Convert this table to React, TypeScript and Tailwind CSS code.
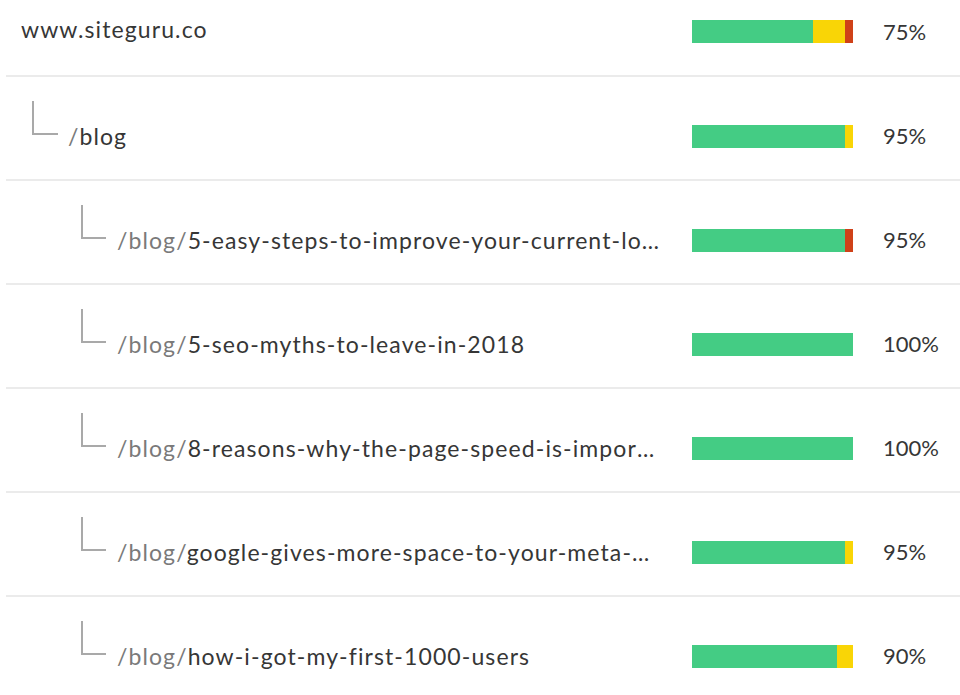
import React from "react";

type Row = {
  level: 0 | 1 | 2;
  prefix?: string;
  text: string;
  green: number;
  yellow: number;
  red: number;
  pct: string;
};

const rows: Row[] = [
  { level: 0, text: "www.siteguru.co", green: 121, yellow: 32, red: 8, pct: "75%" },
  { level: 1, prefix: "/", text: "blog", green: 153, yellow: 8, red: 0, pct: "95%" },
  { level: 2, prefix: "/blog/", text: "5-easy-steps-to-improve-your-current-local-seo-strategy", green: 153, yellow: 0, red: 8, pct: "95%" },
  { level: 2, prefix: "/blog/", text: "5-seo-myths-to-leave-in-2018", green: 161, yellow: 0, red: 0, pct: "100%" },
  { level: 2, prefix: "/blog/", text: "8-reasons-why-the-page-speed-is-important-for-seo", green: 161, yellow: 0, red: 0, pct: "100%" },
  { level: 2, prefix: "/blog/", text: "google-gives-more-space-to-your-meta-descriptions", green: 153, yellow: 8, red: 0, pct: "95%" },
  { level: 2, prefix: "/blog/", text: "how-i-got-my-first-1000-users", green: 145, yellow: 16, red: 0, pct: "90%" },
];

function Connector({ level }: { level: 1 | 2 }) {
  if (level === 1) {
    return (
      <div className="ml-[11px] mr-[10px] mb-[36px] h-[34px] w-[26px] shrink-0 border-b-2 border-l-2 border-[#a9a9a9]" />
    );
  }
  return (
    <div className="ml-[60px] mr-[11px] mb-[36px] h-[34px] w-[25px] shrink-0 border-b-2 border-l-2 border-[#a9a9a9]" />
  );
}

export default function App() {
  return (
    <div
      className="w-[960px] h-[695px] overflow-hidden bg-white pl-[6px]"
      style={{ fontFamily: "Lato, 'Noto Sans', sans-serif" }}
    >
      {rows.map((r, i) => (
        <div
          key={i}
          className={
            i === 0
              ? "flex h-[77px] items-center border-b-2 border-[#ebebeb] pb-[12px] pl-[15px]"
              : "flex h-[104px] items-center border-b-2 border-[#ebebeb] pt-[16px] pl-[15px]"
          }
        >
          <div className="flex min-w-0 flex-1 items-center pr-[30px]">
            {r.level > 0 && <Connector level={r.level as 1 | 2} />}
            <div
              className={
                i === 0
                  ? "mb-[6px] min-w-0 truncate text-[23px] leading-[30px] tracking-[1.1px] text-[#363636]"
                  : "min-w-0 truncate text-[23px] leading-[30px] tracking-[1.1px] text-[#363636]"
              }
            >
              {r.prefix && <span className="text-[#7a7a7a]">{r.prefix}</span>}
              {r.text}
            </div>
          </div>
          <div className="flex h-[23px] w-[161px] shrink-0">
            <div className="h-full bg-[#44cc84]" style={{ width: r.green }} />
            {r.yellow > 0 && <div className="h-full bg-[#f9d506]" style={{ width: r.yellow }} />}
            {r.red > 0 && <div className="h-full bg-[#cf4118]" style={{ width: r.red }} />}
          </div>
          <div className="ml-[30px] w-[77px] shrink-0 text-[22px] leading-[30px] text-[#363636]">
            {r.pct}
          </div>
        </div>
      ))}
    </div>
  );
}
